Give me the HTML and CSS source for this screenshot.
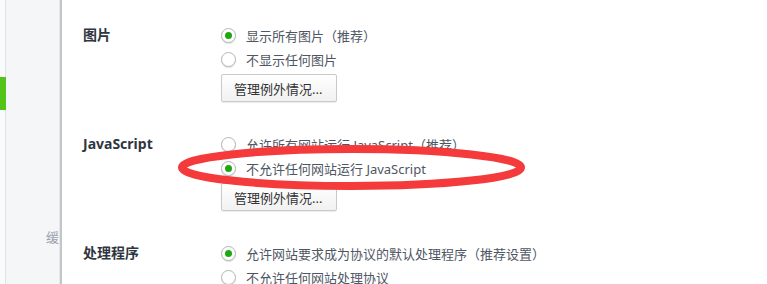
FILE: index.html
```html
<!DOCTYPE html>
<html lang="zh-CN">
<head>
  <meta charset="UTF-8">
  <title>内容设置</title>
  <link rel="stylesheet" href="styles.css">
</head>
<body>
  <div class="sidebar">
    <div class="nav-item active"></div>
    <div class="nav-item cache">缓存设置</div>
  </div>

  <div class="main">
    <div class="section">
      <div class="label">图片</div>
      <div class="options">
        <div class="option"><span class="radio checked"></span>显示所有图片（推荐）</div>
        <div class="option"><span class="radio"></span>不显示任何图片</div>
        <button class="btn">管理例外情况...</button>
      </div>
    </div>

    <div class="section">
      <div class="label">JavaScript</div>
      <div class="options">
        <div class="option"><span class="radio"></span>允许所有网站运行 JavaScript（推荐）</div>
        <div class="option"><span class="radio checked"></span>不允许任何网站运行 JavaScript</div>
        <button class="btn">管理例外情况...</button>
      </div>
    </div>

    <div class="section">
      <div class="label">处理程序</div>
      <div class="options">
        <div class="option"><span class="radio checked"></span>允许网站要求成为协议的默认处理程序（推荐设置）</div>
        <div class="option"><span class="radio"></span>不允许任何网站处理协议</div>
      </div>
    </div>
  </div>

  <!-- red marker drawn over the screenshot -->
  <svg class="mark" width="370" height="60" viewBox="0 0 370 60">
    <ellipse cx="181.5" cy="27.5" rx="169.5" ry="18.5" fill="none" stroke="#f43a3a" stroke-width="8"/>
  </svg>
</body>
</html>
```

FILE: styles.css
```css
body {
  margin: 0;
  height: 284px;
  overflow: hidden;
  display: flex;
  font-family: "Noto Sans", "Noto Sans CJK SC", sans-serif;
  font-size: 13px;
  background: #fff;
  position: relative;
}
.sidebar {
  width: 60px;
  flex-shrink: 0;
  overflow: hidden;
  padding-top: 77px;
  box-sizing: border-box;
  background: linear-gradient(to right, #fafbfb 0 5px, #e2e3e4 5px 6px, #f5f6f8 6px);
}
.nav-item {
  height: 33px;
  white-space: nowrap;
}
.nav-item.active {
  box-shadow: inset 6px 0 #52c41a;
}
.nav-item.cache {
  margin-top: 115px;
  line-height: 24px;
  padding-left: 46px;
  color: #9aa0a8;
}
.main {
  flex: 1;
  border-left: 2px solid #c4c5c7;
  box-shadow: -1px 0 0 #e6e7e9;
  padding: 23px 0 0 21px;
}
.section {
  display: flex;
  margin-bottom: 30px;
}
.label {
  width: 138px;
  line-height: 24px;
  font-size: 14px;
  font-weight: bold;
  color: #2f3640;
}
.options {
  display: flex;
  flex-direction: column;
  align-items: flex-start;
}
.option {
  display: flex;
  align-items: center;
  height: 24px;
  color: #4f5663;
  white-space: nowrap;
}
.radio {
  width: 13px;
  height: 13px;
  border: 1px solid #b4b6b9;
  border-radius: 50%;
  margin-right: 10px;
  box-shadow: 0 1px 1px rgba(0, 0, 0, 0.12);
  background: #fff;
  display: flex;
  align-items: center;
  justify-content: center;
}
.radio.checked::after {
  content: "";
  width: 7px;
  height: 7px;
  border-radius: 50%;
  background: #1ea810;
}
.btn {
  margin-top: 3px;
  height: 28px;
  width: 116px;
  padding: 0 0 0 12px;
  text-align: left;
  font-family: inherit;
  font-size: 13px;
  color: #333;
  border: 1px solid #c9cacc;
  border-radius: 2px;
  background: linear-gradient(#ffffff, #f1f1f1);
  box-shadow: 0 1px 1px rgba(0, 0, 0, 0.08);
}
.mark {
  position: absolute;
  left: 170px;
  top: 140px;
}
```
